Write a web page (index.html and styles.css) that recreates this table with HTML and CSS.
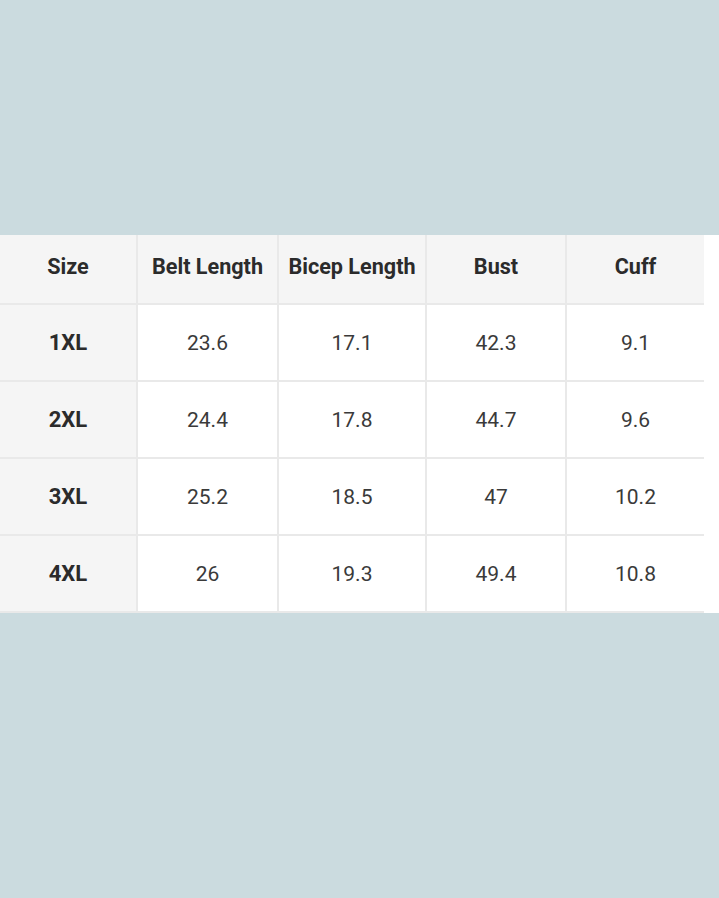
FILE: index.html
```html
<!DOCTYPE html>
<html lang="en">
<head>
<meta charset="utf-8">
<title>Size Chart</title>
<link rel="stylesheet" href="styles.css">
</head>
<body>
<div class="page">
  <div class="band">
    <table class="chart">
      <colgroup>
        <col class="c1"><col class="c2"><col class="c3"><col class="c4"><col class="c5">
      </colgroup>
      <thead>
        <tr><th>Size</th><th>Belt Length</th><th>Bicep Length</th><th>Bust</th><th>Cuff</th></tr>
      </thead>
      <tbody>
        <tr><th>1XL</th><td>23.6</td><td>17.1</td><td>42.3</td><td>9.1</td></tr>
        <tr><th>2XL</th><td>24.4</td><td>17.8</td><td>44.7</td><td>9.6</td></tr>
        <tr><th>3XL</th><td>25.2</td><td>18.5</td><td>47</td><td>10.2</td></tr>
        <tr><th>4XL</th><td>26</td><td>19.3</td><td>49.4</td><td>10.8</td></tr>
      </tbody>
    </table>
  </div>
</div>
</body>
</html>
```
FILE: styles.css
```css
html, body {
  margin: 0;
  padding: 0;
}
body {
  background: #cbdbdf;
  font-family: Roboto, "Liberation Sans", sans-serif;
  color: #333;
}
.page {
  height: 898px;
  padding-top: 235px;
  box-sizing: border-box;
}
.band {
  background: #fff;
  width: 719px;
}
.chart {
  border-collapse: collapse;
  table-layout: fixed;
  width: 704px;
}
.c1 { width: 137px; }
.c2 { width: 141px; }
.c3 { width: 148px; }
.c4 { width: 140px; }
.c5 { width: 138px; }
.chart th, .chart td {
  text-align: center;
  vertical-align: middle;
  border-right: 2px solid #e9e9e9;
  border-bottom: 2px solid #e9e9e9;
  padding: 0;
  white-space: nowrap;
}
.chart th:last-child, .chart td:last-child {
  border-right: none;
}
.chart thead th {
  background: #f5f5f5;
  height: 62px;
  font-size: 21.6px;
  font-weight: 700;
  color: #2b2b2b;
  padding-bottom: 6px;
}
.chart tbody th {
  background: #f5f5f5;
  font-size: 22px;
  font-weight: 700;
  color: #2b2b2b;
}
.chart tbody tr {
  height: 77px;
}
.chart tbody td {
  font-size: 21px;
  font-weight: 400;
  color: #3a3a3a;
  background: #fff;
}
```
